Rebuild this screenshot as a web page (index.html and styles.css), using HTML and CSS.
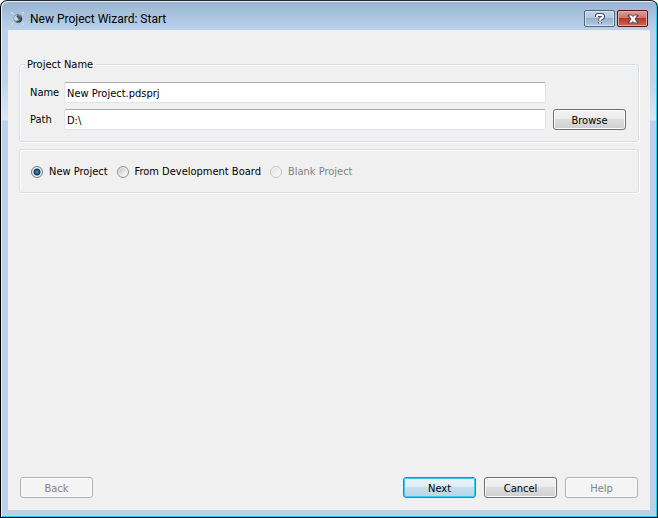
FILE: index.html
```
<!DOCTYPE html>
<html lang="en">
<head>
<meta charset="utf-8">
<title>New Project Wizard: Start</title>
<link rel="stylesheet" href="styles.css">
</head>
<body>
<div class="window">
  <header class="titlebar">
    <svg class="app-icon" viewBox="0 0 16 16" aria-hidden="true">
      <path d="M2 3l12 11M14 3L2 14" stroke="#cfdbe5" stroke-width="1"/>
      <path d="M1 2h2v1H1zM12 2h2v1h-2zM1 14h2v1H1zM12 14h2v1h-2z" fill="#ded8c6"/>
      <circle cx="8" cy="8.500" r="4.500" fill="#7b8d9c"/>
      <path d="M4 8.500C4 5.500 7 4 9 5.500C7 6 6.500 8 8.500 9.500C7 11.500 4 11 4 8.500Z" fill="#c3d6e2"/>
      <path d="M7 5.500L10 8.500" stroke="#44545f" stroke-width="2"/>
      <path d="M10.500 6c2.500 2 2 4.500 0 6c-2 1-4 .500-5-.500c3 .500 5.500-2 5-5.500z" fill="#334350"/>
    </svg>
    <h1 class="title">New Project Wizard: Start</h1>
    <button class="caption-button" type="button" aria-label="Help">
      <svg viewBox="0 0 12 12" aria-hidden="true">
        <path class="glyph-edge" d="M3 4V3Q3 2 4 2H7.500Q9 2 9 3.500Q9 5 7 5.500Q6 6 6 7.500M6 9V10.500"/>
        <path class="glyph-fill" d="M3 4V3Q3 2 4 2H7.500Q9 2 9 3.500Q9 5 7 5.500Q6 6 6 7.500M6 9V10.500"/>
      </svg>
    </button>
    <button class="caption-button close" type="button" aria-label="Close">
      <svg viewBox="0 0 12 12" aria-hidden="true">
        <path class="glyph-edge" d="M1 2H4.500L6 3.500L7.500 2H11V3L8 6L11 9V10H7.500L6 8.500L4.500 10H1V9L4 6L1 3Z"/>
        <path class="glyph-cross" d="M2 2.500H4.500L6 4L7.500 2.500H10L7.500 6L10 9.500H7.500L6 8L4.500 9.500H2L4.500 6Z"/>
      </svg>
    </button>
  </header>
  <form class="client">
    <fieldset class="group project">
      <legend>Project Name</legend>
      <div class="fields">
        <label for="name">Name</label>
        <input class="text" id="name" type="text" value="New Project.pdsprj">
        <label class="path" for="path">Path</label>
        <input class="text" id="path" type="text" value="D:\">
        <button class="button" type="button">Browse</button>
      </div>
    </fieldset>
    <fieldset class="group kinds" aria-label="Project type">
      <label class="choice"><input type="radio" name="kind" checked>New Project</label>
      <label class="choice"><input type="radio" name="kind">From Development Board</label>
      <label class="choice disabled"><input type="radio" name="kind" disabled>Blank Project</label>
    </fieldset>
    <footer class="actions">
      <button class="button back" type="button" disabled>Back</button>
      <button class="button default" type="submit">Next</button>
      <button class="button" type="button">Cancel</button>
      <button class="button" type="button" disabled>Help</button>
    </footer>
  </form>
</div>
</body>
</html>
```
FILE: styles.css
```
* {
  box-sizing: border-box;
}

body {
  margin: 0;
  background: #fff;
  font: 11px/15px "DejaVu Sans Condensed", "Noto Sans", sans-serif;
  color: #000;
}

button,
input {
  font: inherit;
  color: inherit;
}

.window {
  display: flex;
  flex-direction: column;
  min-height: 100vh;
  padding: 0 6px 6px 6px;
  border: 1px solid #000;
  border-top-color: #22282e;
  border-radius: 7px 7px 0 0;
  background: linear-gradient(#98b4d2, #b9d1ea 29px, #bed5ec 80px, #d9e6f4 119px, #b9d1ea 120px);
  box-shadow: inset 1px 1px #e4eff8, inset -1px -1px #1fd0f2;
}

.titlebar {
  display: flex;
  align-items: flex-start;
  height: 29px;
  padding: 9px 3px 0 3px;
}

.app-icon {
  width: 16px;
  height: 16px;
}

.title {
  flex: 1;
  margin: 1px 0 0 4px;
  font: 12px/16px Roboto, "Open Sans", sans-serif;
}

.caption-button {
  display: flex;
  align-items: center;
  justify-content: center;
  width: 31px;
  height: 17px;
  margin-left: 2px;
  padding: 0;
  border: 1px solid #53647d;
  border-radius: 2px;
  background: linear-gradient(#c4d5e7, #b3c8df 45%, #94b0cc 50%, #b3cce4);
  box-shadow: inset 0 0 0 1px #d5e2ef;
}

.caption-button.close {
  border-color: #5a1420;
  background: linear-gradient(#dda096, #cd7568 45%, #b53926 50%, #cf694f);
  box-shadow: inset 0 0 0 1px #e5aaa0;
}

.caption-button svg {
  width: 12px;
  height: 12px;
}

.glyph-edge,
.glyph-fill {
  fill: none;
  stroke: #474c63;
  stroke-width: 4;
}

.close .glyph-edge {
  fill: #474c63;
  stroke-width: 1;
}

.glyph-fill {
  stroke: #fff;
  stroke-width: 2;
}

.glyph-cross {
  fill: #fff;
}

.client {
  display: flex;
  flex: 1;
  flex-direction: column;
  margin: 0 1px 1px;
  padding: 27px 11px 12px;
  background: #f0f0f0;
}

.group {
  min-width: 0;
  margin: 0;
  border: 1px solid #d5dfe5;
  border-radius: 3px;
  box-shadow: inset 1px 1px #fff, 1px 1px #fff;
}

.project {
  padding: 10px 12px 11px 10px;
}

.project legend {
  margin-left: -5px;
  padding: 0 3px 0 2px;
  background: #f0f0f0;
}

.fields {
  display: grid;
  grid-template-columns: 27px 1fr 73px;
  gap: 6px 7px;
  align-items: center;
}

.fields .path {
  grid-column: 1;
}

.text {
  width: 100%;
  height: 21px;
  padding: 3px 2px 1px;
  border: 1px solid #e2e3ea;
  border-top-color: #abadb3;
  border-radius: 2px;
  background: #fff;
}

.kinds {
  display: flex;
  gap: 9px;
  margin-top: 7px;
  padding: 14px 11px 13px;
}

.choice {
  display: flex;
  align-items: center;
  gap: 6px;
}

.choice input {
  appearance: none;
  width: 12px;
  height: 12px;
  margin: 0;
  border: 1px solid #8e8f8f;
  border-radius: 50%;
  background: linear-gradient(135deg, #b9bec4, #f5f5f5 75%);
  box-shadow: inset 0 0 0 1px #f4f4f4;
}

.choice input:checked {
  border-color: #6d7880;
  background: radial-gradient(circle, #63c0e4 0, #247aa5 1px, #12385a 3px, #d9dee2 4px);
}

.choice.disabled {
  color: #838383;
}

.choice input:disabled {
  border-color: #c2c4c5;
  background: linear-gradient(135deg, #dedede, #f5f5f5 75%);
}

.button {
  width: 73px;
  height: 21px;
  padding: 1px 0 0;
  border: 1px solid #707070;
  border-radius: 3px;
  background: linear-gradient(#f2f2f2, #ebebeb 49%, #dddddd 50%, #cfcfcf);
  box-shadow: inset 0 0 0 1px #fafafa;
}

.button.default {
  border-color: #3c7fb1;
  background: linear-gradient(#edf5f9, #dcecf5 49%, #c5dfed 50%, #b7d5e6);
  box-shadow: inset 0 0 0 1px #35cdf4;
}

.button:disabled {
  border-color: #adb2b5;
  background: #f4f4f4;
  color: #838383;
}

.actions {
  display: flex;
  gap: 8px;
  margin-top: auto;
  padding: 0 1px;
}

.actions .back {
  margin-right: auto;
}
```
